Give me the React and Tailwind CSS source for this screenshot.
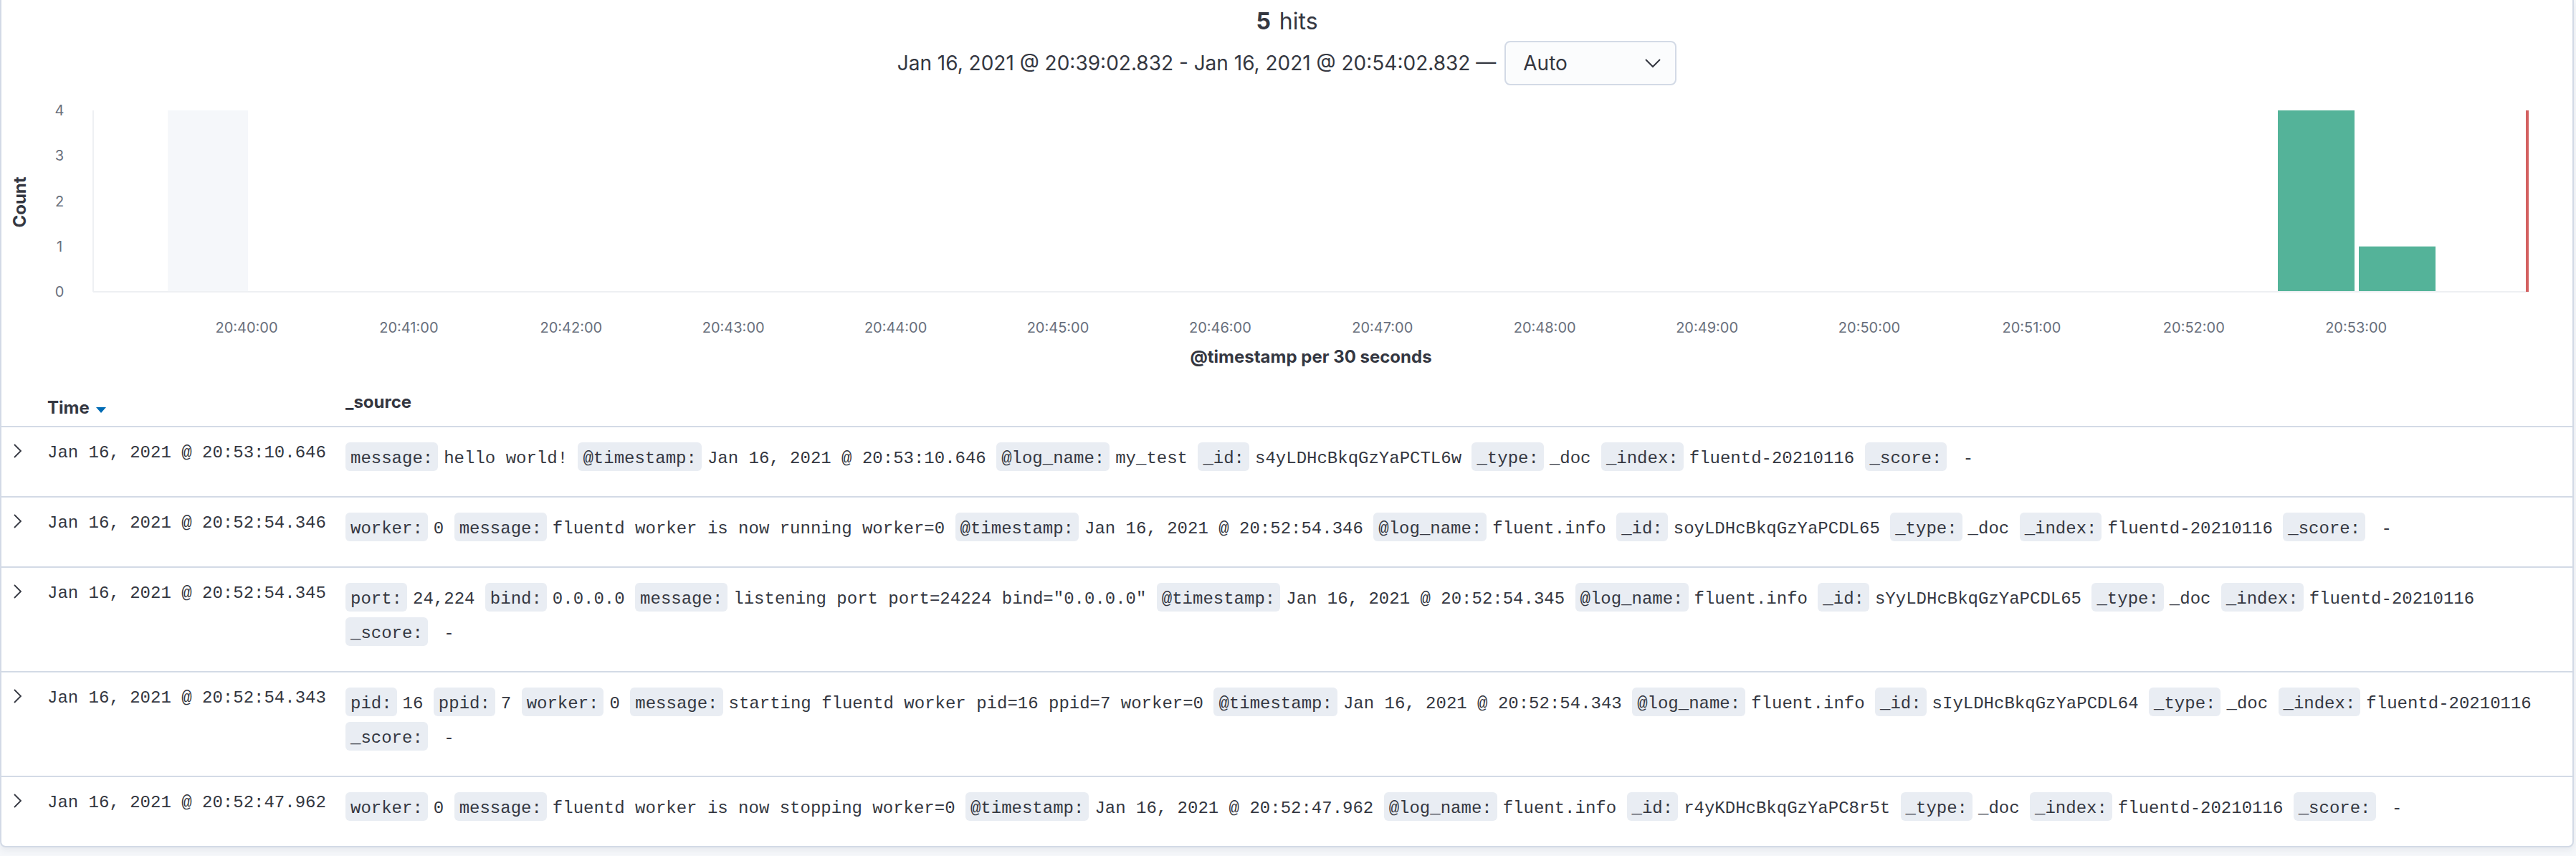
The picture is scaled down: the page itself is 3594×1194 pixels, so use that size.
import React from "react";

const rows = [
  {
    time: "Jan 16, 2021 @ 20:53:10.646",
    lines: [
      [
        ["message:", "hello world!"],
        ["@timestamp:", "Jan 16, 2021 @ 20:53:10.646"],
        ["@log_name:", "my_test"],
        ["_id:", "s4yLDHcBkqGzYaPCTL6w"],
        ["_type:", "_doc"],
        ["_index:", "fluentd-20210116"],
        ["_score:", " -"],
      ],
    ],
  },
  {
    time: "Jan 16, 2021 @ 20:52:54.346",
    lines: [
      [
        ["worker:", "0"],
        ["message:", "fluentd worker is now running worker=0"],
        ["@timestamp:", "Jan 16, 2021 @ 20:52:54.346"],
        ["@log_name:", "fluent.info"],
        ["_id:", "soyLDHcBkqGzYaPCDL65"],
        ["_type:", "_doc"],
        ["_index:", "fluentd-20210116"],
        ["_score:", " -"],
      ],
    ],
  },
  {
    time: "Jan 16, 2021 @ 20:52:54.345",
    lines: [
      [
        ["port:", "24,224"],
        ["bind:", "0.0.0.0"],
        ["message:", 'listening port port=24224 bind="0.0.0.0"'],
        ["@timestamp:", "Jan 16, 2021 @ 20:52:54.345"],
        ["@log_name:", "fluent.info"],
        ["_id:", "sYyLDHcBkqGzYaPCDL65"],
        ["_type:", "_doc"],
        ["_index:", "fluentd-20210116"],
      ],
      [["_score:", " -"]],
    ],
  },
  {
    time: "Jan 16, 2021 @ 20:52:54.343",
    lines: [
      [
        ["pid:", "16"],
        ["ppid:", "7"],
        ["worker:", "0"],
        ["message:", "starting fluentd worker pid=16 ppid=7 worker=0"],
        ["@timestamp:", "Jan 16, 2021 @ 20:52:54.343"],
        ["@log_name:", "fluent.info"],
        ["_id:", "sIyLDHcBkqGzYaPCDL64"],
        ["_type:", "_doc"],
        ["_index:", "fluentd-20210116"],
      ],
      [["_score:", " -"]],
    ],
  },
  {
    time: "Jan 16, 2021 @ 20:52:47.962",
    lines: [
      [
        ["worker:", "0"],
        ["message:", "fluentd worker is now stopping worker=0"],
        ["@timestamp:", "Jan 16, 2021 @ 20:52:47.962"],
        ["@log_name:", "fluent.info"],
        ["_id:", "r4yKDHcBkqGzYaPC8r5t"],
        ["_type:", "_doc"],
        ["_index:", "fluentd-20210116"],
        ["_score:", " -"],
      ],
    ],
  },
];

const ticks = [
  "20:40:00",
  "20:41:00",
  "20:42:00",
  "20:43:00",
  "20:44:00",
  "20:45:00",
  "20:46:00",
  "20:47:00",
  "20:48:00",
  "20:49:00",
  "20:50:00",
  "20:51:00",
  "20:52:00",
  "20:53:00",
];

function Chart() {
  // svg origin = page (2, 120)
  const ox = 2;
  const oy = 120;
  const top = 154 - oy;
  const base = 407 - oy;
  const step = (base - top) / 4;
  return (
    <svg width="3587" height="407" className="block">
      <text
        x={27 - ox}
        y={282 - oy}
        transform={`rotate(-90 ${27 - ox} ${282 - oy})`}
        textAnchor="middle"
        dominantBaseline="central"
        fontFamily="Inter, sans-serif"
        fontWeight="700"
        fontSize="24"
        fill="#343741"
      >
        Count
      </text>
      {[4, 3, 2, 1, 0].map((v, i) => (
        <text
          key={v}
          x={83 - ox}
          y={top + i * step}
          textAnchor="middle"
          dominantBaseline="central"
          fontFamily="Inter, sans-serif"
          fontSize="20"
          fill="#69707d"
        >
          {v}
        </text>
      ))}
      <rect x={234 - ox} y={top} width="112" height={base - top} fill="#f5f7fa" />
      <rect x={3178 - ox} y={top} width="107" height={base - top} fill="#54b399" />
      <rect x={3291 - ox} y={base - step} width="107" height={step} fill="#54b399" />
      <line x1={130 - ox} y1={top} x2={130 - ox} y2={base} stroke="#eef0f3" strokeWidth="2" />
      <line x1={130 - ox} y1={base} x2={3528 - ox} y2={base} stroke="#eef0f3" strokeWidth="2" />
      <rect x={3524 - ox} y={top} width="4" height={base - top} fill="#d36060" />
      {ticks.map((t, i) => (
        <text
          key={t}
          x={344 + i * 226.4 - ox}
          y={457 - oy}
          textAnchor="middle"
          dominantBaseline="central"
          fontFamily="Inter, sans-serif"
          fontSize="20"
          fill="#69707d"
        >
          {t}
        </text>
      ))}
      <text
        x={1829 - ox}
        y={497 - oy}
        textAnchor="middle"
        dominantBaseline="central"
        fontFamily="Inter, sans-serif"
        fontWeight="700"
        fontSize="24"
        fill="#343741"
      >
        @timestamp per 30 seconds
      </text>
    </svg>
  );
}

function Line({ items }) {
  return (
    <div className="flex h-[48px] items-center whitespace-pre">
      {items.map(([k, v], i) => {
        const last = i === items.length - 1;
        const val = last ? v : v + " ";
        return (
          <React.Fragment key={i}>
            <span className="mr-[8px] inline-block h-[40px] rounded-[6px] bg-[#e9edf3] px-[7px] pt-[3px] leading-[40px]">
              {k}
            </span>
            <span className="inline-block h-[40px] pt-[3px] leading-[40px]">{val}</span>
          </React.Fragment>
        );
      })}
    </div>
  );
}

function Row({ row, last }) {
  return (
    <div
      className={`flex ${last ? "" : "border-b-2 border-[#d3dae6]"} font-['Liberation_Mono',monospace] text-[24px] text-[#343741]`}
    >
      <div className="w-[48px] shrink-0 pl-[16px] pt-[23px]">
        <svg width="14" height="20" viewBox="0 0 14 20">
          <polyline points="2,1 11,10 2,19" fill="none" stroke="#343741" strokeWidth="1.8" />
        </svg>
      </div>
      <div className="w-[416px] shrink-0 pl-[16px] pt-[18px] leading-[36px] whitespace-pre">{row.time}</div>
      <div className="flex-1 pl-[16px] pt-[17px] pb-[31px]">
        {row.lines.map((l, i) => (
          <Line key={i} items={l} />
        ))}
      </div>
    </div>
  );
}

export default function App() {
  return (
    <div className="min-h-screen bg-[#f5f7fa] font-['Inter',sans-serif] text-[#343741]">
      <div className="w-[3591px] rounded-b-[8px] border-2 border-t-0 border-[#d3dae6] bg-white shadow-[0_4px_8px_rgba(65,78,101,0.08)]">
        <div className="flex h-[120px] flex-col items-center pt-[10px]">
          <div className="text-[32px] leading-[40px]">
            <strong className="font-bold">5</strong>
            <span className="ml-[12px]">hits</span>
          </div>
          <div className="mt-[7px] flex items-center text-[28px]">
            <span>Jan 16, 2021 @ 20:39:02.832 - Jan 16, 2021 @ 20:54:02.832 —</span>
            <div className="ml-[12px] flex h-[62px] w-[240px] items-center justify-between rounded-[8px] border-2 border-[#d3dae6] bg-[#fbfcfd] pl-[24px] pr-[20px]">
              <span>Auto</span>
              <svg width="22" height="13" viewBox="0 0 22 13">
                <polyline points="1,1 11,11 21,1" fill="none" stroke="#343741" strokeWidth="2" />
              </svg>
            </div>
          </div>
        </div>
        <Chart />
        <div className="flex h-[69px] border-b-2 border-[#d3dae6] pt-[16px] text-[24px] font-bold leading-[36px]">
          <div className="w-[48px] shrink-0" />
          <div className="flex w-[416px] shrink-0 items-center pl-[16px]">
            <span>Time</span>
            <svg width="14" height="9" viewBox="0 0 14 9" className="ml-[9px] mt-[8px]">
              <polygon points="0,0 14,0 7,8" fill="#006bb4" />
            </svg>
          </div>
          <div className="pl-[16px]">_source</div>
        </div>
        {rows.map((r, i) => (
          <Row key={i} row={r} last={i === rows.length - 1} />
        ))}
      </div>
    </div>
  );
}
